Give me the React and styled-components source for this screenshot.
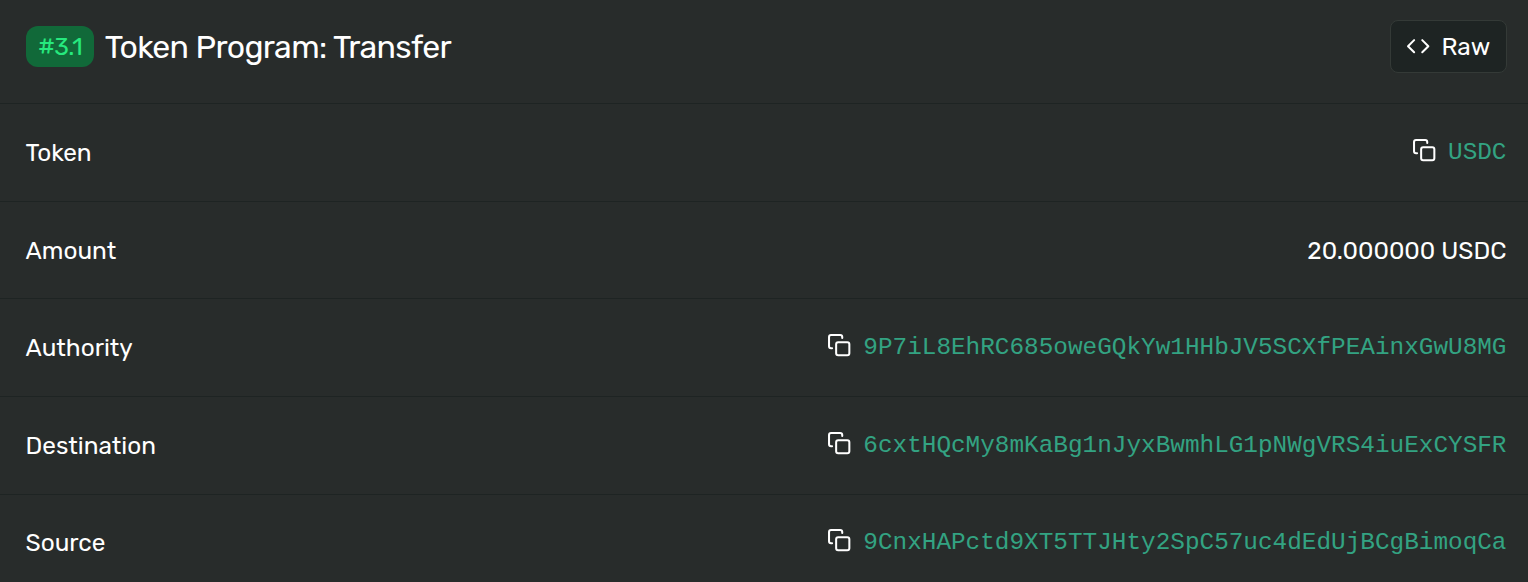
import React from "react";
import styled, { createGlobalStyle } from "styled-components";

const GlobalStyle = createGlobalStyle`
  * {
    box-sizing: border-box;
  }

  body {
    margin: 0;
    background-color: #282c2b;
    overflow: hidden;
  }
`;

const Card = styled.div`
  display: flex;
  flex-direction: column;
  width: 100%;
  height: 582px;
  overflow: hidden;
  background-color: #282c2b;
  color: #fff;
  font-family: Rubik, Roboto, sans-serif;
  font-size: 24.375px;
  line-height: 36.5px;
`;

const CardHeader = styled.div`
  display: flex;
  flex-shrink: 0;
  justify-content: space-between;
  align-items: flex-start;
  height: 104.33px;
  padding: 20px 21px 0 26px;
  border-bottom: 1px solid #1e2423;
`;

const Title = styled.h3`
  display: flex;
  align-items: center;
  margin: 6px 0 0;
  font-size: 32px;
  font-weight: 400;
  letter-spacing: -0.64px;
  line-height: 41px;
`;

const TitleText = styled.span`
  margin: 1px 0 -1px 10.7px;
  white-space: nowrap;
`;

const Badge = styled.span`
  width: 68px;
  height: 41px;
  border-radius: 12px;
  background-color: #116939;
  color: #26e97e;
  font-size: 24.375px;
  text-align: center;
`;

const RawButton = styled.button`
  display: flex;
  align-items: center;
  width: 117px;
  height: 53px;
  padding: 0 0 0 15px;
  border: 1px solid #343a37;
  border-radius: 8px;
  background-color: #1e2423;
  color: #fff;
  font-family: inherit;
  font-size: 24.375px;
`;

const RawLabel = styled.span`
  margin-left: 11px;
`;

const Row = styled.div`
  display: flex;
  flex-shrink: 0;
  justify-content: space-between;
  align-items: flex-start;
  height: 97.57px;
  padding: 30.72px 21.5px 0 25.5px;
  border-bottom: 1px solid #1e2423;
`;

const Label = styled.span`
  white-space: nowrap;
`;

const Amount = styled.span`
  white-space: nowrap;
`;

const Address = styled.div`
  display: flex;
  align-items: flex-start;
`;

const AddressLink = styled.span`
  margin-left: 12px;
  color: #33a382;
  font-family: "Liberation Mono", monospace;
`;

const Icon = styled.svg`
  display: block;
  width: 24.375px;
  height: 24.375px;
  margin-top: ${props => props.$offset || "0"};
  fill: none;
  stroke: #fff;
  stroke-width: 2;
  stroke-linecap: round;
  stroke-linejoin: round;
`;

const CopyIcon = () => (
  <Icon viewBox="0 0 24 24" $offset="3.05px">
    <rect x="9" y="9" width="13" height="13" rx="2" />
    <path d="M5 15H4a2 2 0 0 1-2-2V4a2 2 0 0 1 2-2h9a2 2 0 0 1 2 2v1" />
  </Icon>
);

const CodeIcon = () => (
  <Icon viewBox="0 0 24 24">
    <polyline points="16 18 22 12 16 6" />
    <polyline points="8 6 2 12 8 18" />
  </Icon>
);

const rows = [
  { label: "Token", address: "USDC" },
  { label: "Amount", amount: "20.000000 USDC" },
  {
    label: "Authority",
    address: "9P7iL8EhRC685oweGQkYw1HHbJV5SCXfPEAinxGwU8MG"
  },
  {
    label: "Destination",
    address: "6cxtHQcMy8mKaBg1nJyxBwmhLG1pNWgVRS4iuExCYSFR"
  },
  {
    label: "Source",
    address: "9CnxHAPctd9XT5TTJHty2SpC57uc4dEdUjBCgBimoqCa"
  }
];

const App = () => {
  return (
    <>
      <GlobalStyle />
      <Card>
        <CardHeader>
          <Title>
            <Badge>#3.1</Badge>
            <TitleText>Token Program: Transfer</TitleText>
          </Title>
          <RawButton>
            <CodeIcon />
            <RawLabel>Raw</RawLabel>
          </RawButton>
        </CardHeader>
        {rows.map(row => {
          return (
            <Row key={row.label}>
              <Label>{row.label}</Label>
              {row.address ? (
                <Address>
                  <CopyIcon />
                  <AddressLink>{row.address}</AddressLink>
                </Address>
              ) : (
                <Amount>{row.amount}</Amount>
              )}
            </Row>
          );
        })}
      </Card>
    </>
  );
};

export default App;
